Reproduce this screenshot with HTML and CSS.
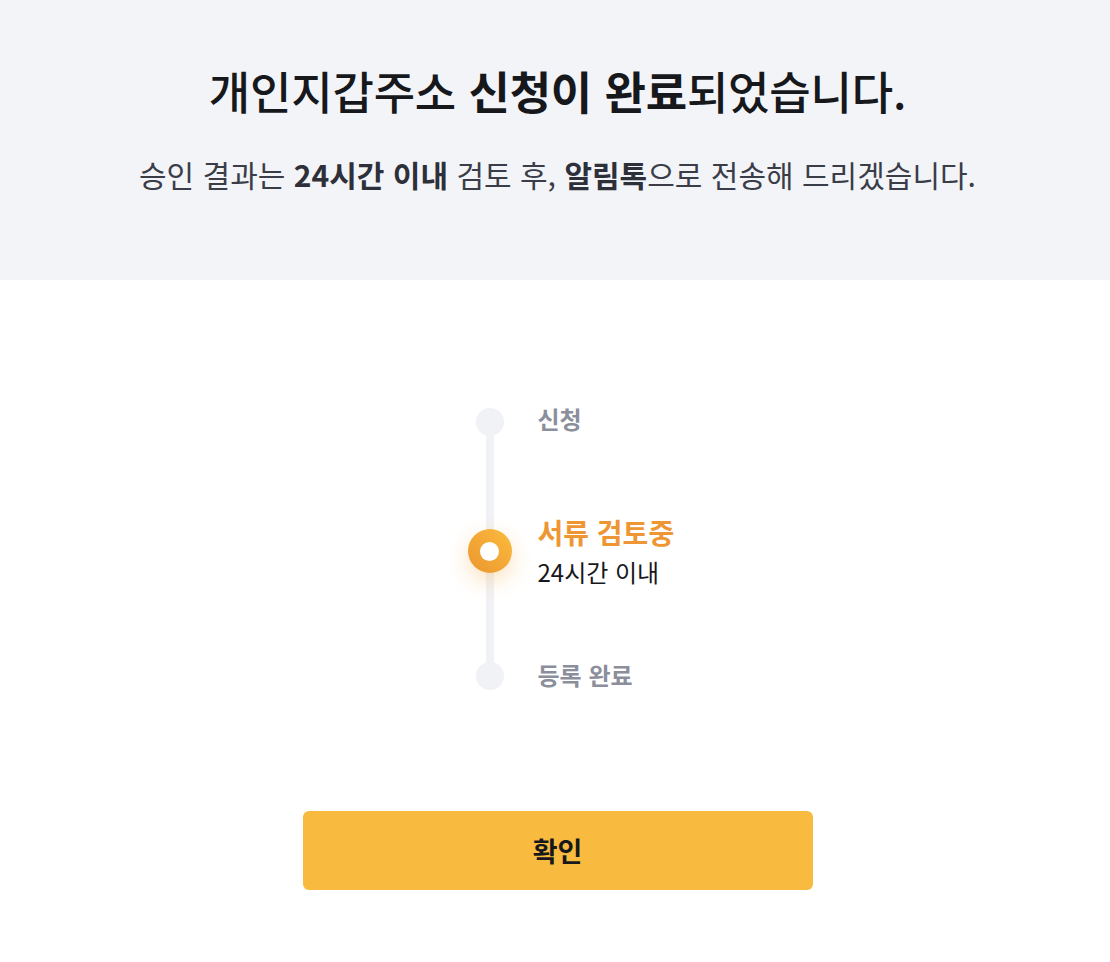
FILE: index.html
```html
<!DOCTYPE html>
<html lang="ko">
<head>
<meta charset="utf-8">
<title>개인지갑주소 신청 완료</title>
<link rel="stylesheet" href="styles.css">
</head>
<body>
<header class="hero">
  <h1 class="hero-title">개인지갑주소 <strong>신청이 완료</strong>되었습니다.</h1>
  <p class="hero-sub">승인 결과는 <strong>24시간 이내</strong> 검토 후, <strong>알림톡</strong>으로 전송해 드리겠습니다.</p>
</header>
<main class="content">
  <div class="timeline-wrap">
    <ol class="timeline">
      <li class="step step-first">
        <span class="dot"></span>
        <div class="step-text"><span class="step-label">신청</span></div>
      </li>
      <li class="step step-active">
        <span class="dot dot-active"><span class="dot-inner"></span></span>
        <div class="step-text">
          <span class="step-label">서류 검토중</span>
          <span class="step-desc">24시간 이내</span>
        </div>
      </li>
      <li class="step step-last">
        <span class="dot"></span>
        <div class="step-text"><span class="step-label">등록 완료</span></div>
      </li>
    </ol>
  </div>
  <button class="confirm" type="button">확인</button>
</main>
</body>
</html>
```

FILE: styles.css
```css
* { box-sizing: border-box; }
html, body {
  margin: 0;
  padding: 0;
  background: #ffffff;
  font-family: "Noto Sans CJK KR", "Noto Sans", sans-serif;
  color: #17181c;
}
.hero {
  height: 280px;
  background: #f3f4f8;
  padding: 63px 0 0 5px;
  text-align: center;
}
.hero-title {
  margin: 0;
  font-size: 45px;
  line-height: 56px;
  font-weight: 500;
  letter-spacing: -0.2px;
  color: #17181c;
}
.hero-title strong { font-weight: 700; }
.hero-sub {
  margin: 35px 0 0;
  font-size: 30px;
  line-height: 40px;
  font-weight: 400;
  letter-spacing: 0;
  color: #3a3d48;
}
.hero-sub strong { font-weight: 700; color: #2e3039; }

.content {
  display: flex;
  flex-direction: column;
  align-items: center;
  padding: 128px 0 0 5px;
}
.timeline-wrap {
  width: 510px;
  padding-left: 173px;
}
.timeline {
  position: relative;
  list-style: none;
  margin: 0;
  padding: 0;
  display: flex;
  flex-direction: column;
}
.timeline::before {
  content: "";
  position: absolute;
  left: 10px;
  top: 14px;
  bottom: 14px;
  width: 8px;
  background: #f1f2f6;
  border-radius: 4px;
}
.step {
  position: relative;
  display: grid;
  grid-template-columns: 28px 1fr;
  column-gap: 34px;
  align-items: center;
}
.step-active { margin-top: 78px; }
.step-last { margin-top: 74px; }
.dot {
  width: 28px;
  height: 28px;
  border-radius: 50%;
  background: #f1f2f6;
  justify-self: center;
  z-index: 1;
}
.dot-active {
  width: 44px;
  height: 44px;
  margin: 0 -8px;
  display: flex;
  align-items: center;
  justify-content: center;
  background: linear-gradient(to right top, #ec962f, #fbbb3e);
  box-shadow: 0 8px 22px rgba(246, 165, 50, 0.32);
}
.dot-inner {
  width: 19px;
  height: 19px;
  border-radius: 50%;
  background: #ffffff;
}
.step-text {
  display: flex;
  flex-direction: column;
}
.step-label {
  font-size: 24px;
  line-height: 28px;
  font-weight: 700;
  letter-spacing: 0;
  color: #8b8e9b;
}
.step-first .step-label { margin-top: -6px; }
.step-last .step-label { margin-top: -3px; }
.step-active .step-label {
  font-size: 28px;
  line-height: 36px;
  color: #ef9634;
}
.step-desc {
  margin-top: 6px;
  font-size: 24px;
  line-height: 32px;
  font-weight: 400;
  letter-spacing: 0;
  color: #17181c;
}
.confirm {
  margin-top: 121px;
  width: 510px;
  height: 79px;
  border: 0;
  border-radius: 6px;
  background: #f8bb3f;
  font-family: "Noto Sans CJK KR", "Noto Sans", sans-serif;
  font-size: 27px;
  font-weight: 700;
  color: #17181c;
  cursor: pointer;
}
```
